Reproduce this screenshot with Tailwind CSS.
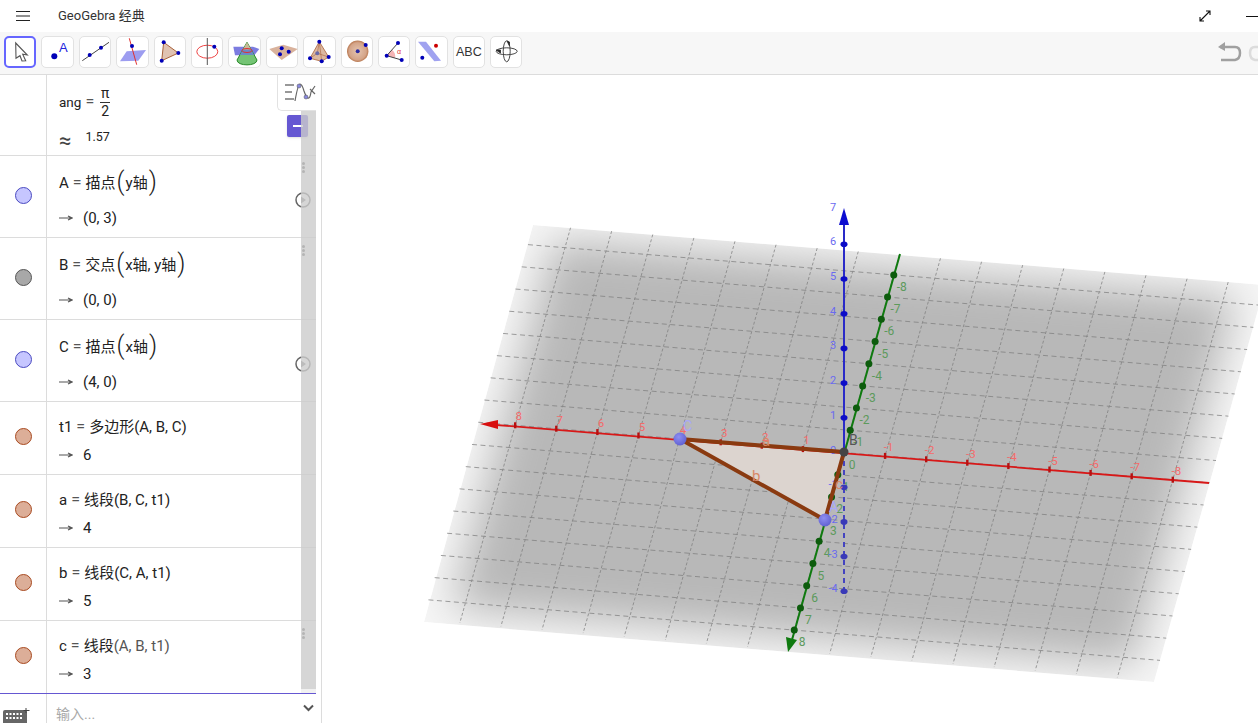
<!DOCTYPE html>
<html lang="zh-CN">
<head>
  <meta charset="UTF-8">
  <title>GeoGebra 经典</title>
  <script src="https://cdn.jsdelivr.net/npm/@tailwindcss/browser@4"></script>
</head>
<body class="w-[1258px] h-[723px] overflow-hidden bg-white text-[#222] font-[family-name:Roboto,'Noto_Sans_CJK_SC',sans-serif]">

  <!-- Header -->
  <header class="h-[32px] flex items-center relative">
    <svg class="ml-[16px] w-[14px] h-[10px]" viewBox="0 0 14 10"><path d="M0 .5h14M0 5h14M0 9.5h14" stroke="#222" stroke-width="1"/></svg>
    <span class="ml-[28px] text-[13px] text-[#333]">GeoGebra 经典</span>
    <div class="ml-auto flex items-center">
      <svg class="w-[12px] h-[12px] mr-[35px]" viewBox="0 0 12 12" fill="none" stroke="#111" stroke-width="1.1"><path d="M1 11 11 1M7 1h4v4M1 7v4h4"/></svg>
      <div class="w-[12px] h-px bg-[#111]"></div>
    </div>
  </header>

  <!-- Toolbar -->
  <div class="h-[43px] bg-[#f7f7f7] border-b border-[#dcdcdc] flex items-start pl-[4px] pt-[4px] gap-[5px] relative overflow-hidden">
    <button class="w-[32.4px] h-[32px] shrink-0 flex items-center justify-center rounded-[5px] bg-white border-2 border-[#6666ff]">
      <svg class="w-[32px] h-[32px] shrink-0" viewBox="0 0 32 32"><path d="M11.7 7 23.3 19l-4.6-.7 3 6.4-3.7.3-2-5.3-4 2.6z" fill="#fff" stroke="#555" stroke-width="1.1"/></svg>
    </button>
    <button class="w-[32.4px] h-[32px] shrink-0 flex items-center justify-center rounded-[5px] bg-white border border-[#e2e2e2]">
      <svg class="w-[32px] h-[32px] shrink-0" viewBox="0 0 32 32"><circle cx="12.3" cy="20.3" r="3" fill="#0000b8"/><text x="17" y="16" font-size="13" fill="#2222dd" font-family="Liberation Sans">A</text></svg>
    </button>
    <button class="w-[32.4px] h-[32px] shrink-0 flex items-center justify-center rounded-[5px] bg-white border border-[#e2e2e2]">
      <svg class="w-[32px] h-[32px] shrink-0" viewBox="0 0 32 32"><path d="M3.3 24.7 30 6.3" stroke="#444" stroke-width="1"/><circle cx="10.7" cy="19" r="2" fill="#0000b8"/><circle cx="22" cy="11.7" r="2" fill="#0000b8"/></svg>
    </button>
    <button class="w-[32.4px] h-[32px] shrink-0 flex items-center justify-center rounded-[5px] bg-white border border-[#e2e2e2]">
      <svg class="w-[32px] h-[32px] shrink-0" viewBox="0 0 32 32"><path d="M4 25.3 10.7 15.3 30 14 22.3 24.7z" fill="#9d9df0"/><path d="M13.3 2.3 20.7 28.7" stroke="#e03030" stroke-width="1"/><circle cx="16" cy="10" r="2" fill="#0000b8"/></svg>
    </button>
    <button class="w-[32.4px] h-[32px] shrink-0 flex items-center justify-center rounded-[5px] bg-white border border-[#e2e2e2]">
      <svg class="w-[32px] h-[32px] shrink-0" viewBox="0 0 32 32"><path d="M9.7 6.3 24.3 17 7.7 24.7z" fill="#e0c3b2" stroke="#a9623a" stroke-width="1"/><circle cx="9.7" cy="6.3" r="2" fill="#0000b8"/><circle cx="24.3" cy="17" r="2" fill="#0000b8"/><circle cx="7.7" cy="24.7" r="2" fill="#0000b8"/></svg>
    </button>
    <button class="w-[32.4px] h-[32px] shrink-0 flex items-center justify-center rounded-[5px] bg-white border border-[#e2e2e2]">
      <svg class="w-[32px] h-[32px] shrink-0" viewBox="0 0 32 32"><ellipse cx="16.3" cy="15.7" rx="10.5" ry="6.5" fill="none" stroke="#ee4444" stroke-width="1"/><path d="M16.3 2v27" stroke="#555" stroke-width="1"/><circle cx="23.3" cy="10.7" r="2" fill="#0000b8"/></svg>
    </button>
    <button class="w-[32.4px] h-[32px] shrink-0 flex items-center justify-center rounded-[5px] bg-white border border-[#e2e2e2]">
      <svg class="w-[32px] h-[32px] shrink-0" viewBox="0 0 32 32"><path d="M4.300 10.700H24l6.300 2.300-5 6.300H6z" fill="#7c7ce0"/><path d="M18 6.300 8 24c0 6.500 20 6.500 20 0z" fill="#74c474" stroke="#2a8a2a" stroke-width="1"/><path d="M14 13 11 19h14l-3-6z" fill="#6a8ac8"/><path d="M18 6.300 14 13.500h8z" fill="#c8b898"/><ellipse cx="18" cy="14.500" rx="5" ry="2" fill="none" stroke="#e03030"/></svg>
    </button>
    <button class="w-[32.4px] h-[32px] shrink-0 flex items-center justify-center rounded-[5px] bg-white border border-[#e2e2e2]">
      <svg class="w-[32px] h-[32px] shrink-0" viewBox="0 0 32 32"><path d="M3.300 13 17.300 8.700 31.700 13 15.700 24z" fill="#d9b29c"/><circle cx="15.700" cy="12.300" r="2" fill="#0000b8"/><circle cx="22.700" cy="15.700" r="2" fill="#0000b8"/><circle cx="14" cy="18.300" r="2" fill="#0000b8"/></svg>
    </button>
    <button class="w-[32.4px] h-[32px] shrink-0 flex items-center justify-center rounded-[5px] bg-white border border-[#e2e2e2]">
      <svg class="w-[32px] h-[32px] shrink-0" viewBox="0 0 32 32"><path d="M16.300 5.700 7 22.300 18.700 25.300 25.700 21z" fill="#dcb8a0" stroke="#a9623a" stroke-width=".8"/><path d="M16.300 5.700 14.300 17.300 7 22.300M14.300 17.300 25.700 21M16.300 5.700 18.700 25.300" stroke="#a9623a" stroke-width=".6" fill="none"/><circle cx="16.300" cy="5.700" r="2" fill="#0000b8"/><circle cx="7" cy="22.300" r="2" fill="#0000b8"/><circle cx="18.700" cy="25.300" r="2" fill="#0000b8"/><circle cx="25.700" cy="21" r="2" fill="#0000b8"/><circle cx="14.300" cy="17.300" r="2" fill="#6a6aa8"/></svg>
    </button>
    <button class="w-[32.4px] h-[32px] shrink-0 flex items-center justify-center rounded-[5px] bg-white border border-[#e2e2e2]">
      <svg class="w-[32px] h-[32px] shrink-0" viewBox="0 0 32 32"><defs><radialGradient id="ball"><stop offset="0" stop-color="#e4c4b0"/><stop offset=".8" stop-color="#d4a488"/><stop offset="1" stop-color="#b87850"/></radialGradient></defs><circle cx="16.700" cy="15.300" r="10.700" fill="url(#ball)"/><circle cx="16.700" cy="15.300" r="2" fill="#2a2aa0"/><circle cx="24.700" cy="9" r="2" fill="#0000b8"/></svg>
    </button>
    <button class="w-[32.4px] h-[32px] shrink-0 flex items-center justify-center rounded-[5px] bg-white border border-[#e2e2e2]">
      <svg class="w-[32px] h-[32px] shrink-0" viewBox="0 0 32 32"><path d="M8.700 19.700 14 13.700Q18 17 17 22z" fill="#f5b5b5"/><path d="M20 7 8.700 19.700 23.700 24" fill="none" stroke="#444" stroke-width="1"/><circle cx="20" cy="7" r="2" fill="#0000b8"/><circle cx="8.700" cy="19.700" r="2" fill="#0000b8"/><circle cx="23.700" cy="24" r="2" fill="#0000b8"/><text x="19" y="18" font-size="7" fill="#e03030" font-family="Liberation Sans">α</text></svg>
    </button>
    <button class="w-[32.4px] h-[32px] shrink-0 flex items-center justify-center rounded-[5px] bg-white border border-[#e2e2e2]">
      <svg class="w-[32px] h-[32px] shrink-0" viewBox="0 0 32 32"><path d="M2 5.700h8L25 24.700 18.300 25.300z" fill="#a0a2f0"/><circle cx="20" cy="9.700" r="2" fill="#cc0000"/><circle cx="6.300" cy="21.700" r="2" fill="#0000b8"/></svg>
    </button>
    <button class="w-[32.4px] h-[32px] shrink-0 flex items-center justify-center rounded-[5px] bg-white border border-[#e2e2e2] text-[12.500px] text-[#333] font-[family-name:'Liberation_Sans',sans-serif]">ABC</button>
    <button class="w-[32.4px] h-[32px] shrink-0 flex items-center justify-center rounded-[5px] bg-white border border-[#e2e2e2]">
      <svg class="w-[32px] h-[32px] shrink-0" viewBox="0 0 32 32" fill="none" stroke="#333" stroke-width=".9"><ellipse cx="16.700" cy="15.300" rx="10.500" ry="3.500"/><ellipse cx="16.700" cy="15.300" rx="3.500" ry="10.500"/><path d="M6 14h4.500v3z" fill="#222"/><path d="M17 5l2.500 1v4z" fill="#222"/></svg>
    </button>
    <div class="ml-auto flex items-center pt-[6px] gap-[6px] -mr-[14px]">
      <svg class="w-[24px] h-[20px] shrink-0" viewBox="0 0 24 20" fill="none"><path d="M2 5h15q5 0 5 6t-5 7H3" stroke="#a0a0a0" stroke-width="2.500"/><path d="M0 5 7 0v9z" fill="#a0a0a0"/></svg>
      <svg class="w-[24px] h-[20px] shrink-0" viewBox="0 0 24 20" fill="none"><path d="M22 5H7q-5 0-5 6t5 7h14" stroke="#dcdcdc" stroke-width="2.500"/></svg>
    </div>
  </div>

  <main class="flex h-[648px]">
    <!-- Algebra view -->
    <aside class="w-[322px] shrink-0 border-r border-[#dcdcdc] relative overflow-hidden">
      <div class="w-[316px] text-[15px] text-[#222]">

        <div class="h-[81px] flex border-b border-[#dcdcdc] text-[13.500px]">
          <div class="w-[47px] shrink-0 border-r border-[#dcdcdc]"></div>
          <div class="pl-[12px]">
            <div class="flex items-center h-[52px] pt-[2px] gap-[3px]">
              <span>ang</span><span class="text-[16px] px-px text-[#555]">=</span>
              <span class="flex flex-col items-center leading-[16px] text-[14px] ml-[2px]"><span>π</span><span class="border-t border-[#333] px-[1px] mt-[1px]">2</span></span>
            </div>
            <div class="flex items-center h-[22px] gap-[14px]"><span class="text-[22px] leading-none text-[#444] mt-[5px]">≈</span><span class="text-[12.500px] -mt-[2px]">1.57</span></div>
          </div>
        </div>

        <div class="h-[82px] flex border-b border-[#dcdcdc]">
          <div class="w-[47px] shrink-0 border-r border-[#dcdcdc] flex items-center justify-center pb-[3px]"><div class="w-[17px] h-[17px] rounded-full bg-[#c6c6ff] border border-[#4a4ac0]"></div></div>
          <div class="pl-[12px]">
            <div class="flex items-center h-[52px] pt-[2px] gap-[3px]"><span>A</span><span class="text-[16px] px-px text-[#555]">=</span><span>描点</span><span class="text-[25px] font-light leading-none -mt-[3px] -mx-[2px]">(</span><span>y轴</span><span class="text-[25px] font-light leading-none -mt-[3px] -mx-[2px]">)</span></div>
            <div class="flex items-center h-[20px] gap-[10px]"><svg class="w-[14px] h-[8px]" viewBox="0 0 14 8"><path d="M0 4h12M9 2l4 2-4 2" fill="none" stroke="#555" stroke-width="1.200"/></svg><span>(0, 3)</span></div>
          </div>
        </div>

        <div class="h-[82px] flex border-b border-[#dcdcdc]">
          <div class="w-[47px] shrink-0 border-r border-[#dcdcdc] flex items-center justify-center pb-[3px]"><div class="w-[17px] h-[17px] rounded-full bg-[#a8a8a8] border border-[#555]"></div></div>
          <div class="pl-[12px]">
            <div class="flex items-center h-[52px] pt-[2px] gap-[3px]"><span>B</span><span class="text-[16px] px-px text-[#555]">=</span><span>交点</span><span class="text-[25px] font-light leading-none -mt-[3px] -mx-[2px]">(</span><span>x轴, y轴</span><span class="text-[25px] font-light leading-none -mt-[3px] -mx-[2px]">)</span></div>
            <div class="flex items-center h-[20px] gap-[10px]"><svg class="w-[14px] h-[8px]" viewBox="0 0 14 8"><path d="M0 4h12M9 2l4 2-4 2" fill="none" stroke="#555" stroke-width="1.200"/></svg><span>(0, 0)</span></div>
          </div>
        </div>

        <div class="h-[82px] flex border-b border-[#dcdcdc]">
          <div class="w-[47px] shrink-0 border-r border-[#dcdcdc] flex items-center justify-center pb-[3px]"><div class="w-[17px] h-[17px] rounded-full bg-[#c6c6ff] border border-[#4a4ac0]"></div></div>
          <div class="pl-[12px]">
            <div class="flex items-center h-[52px] pt-[2px] gap-[3px]"><span>C</span><span class="text-[16px] px-px text-[#555]">=</span><span>描点</span><span class="text-[25px] font-light leading-none -mt-[3px] -mx-[2px]">(</span><span>x轴</span><span class="text-[25px] font-light leading-none -mt-[3px] -mx-[2px]">)</span></div>
            <div class="flex items-center h-[20px] gap-[10px]"><svg class="w-[14px] h-[8px]" viewBox="0 0 14 8"><path d="M0 4h12M9 2l4 2-4 2" fill="none" stroke="#555" stroke-width="1.200"/></svg><span>(4, 0)</span></div>
          </div>
        </div>

        <div class="h-[73px] flex border-b border-[#dcdcdc]">
          <div class="w-[47px] shrink-0 border-r border-[#dcdcdc] flex items-center justify-center pb-[3px]"><div class="w-[17px] h-[17px] rounded-full bg-[#dcae98] border border-[#a84a20]"></div></div>
          <div class="pl-[12px]">
            <div class="flex items-center h-[46px] pt-[4px] gap-[3px]"><span>t1</span><span class="text-[16px] px-px text-[#555]">=</span><span>多边形(A, B, C)</span></div>
            <div class="flex items-center h-[18px] -mt-[2px] gap-[10px]"><svg class="w-[14px] h-[8px]" viewBox="0 0 14 8"><path d="M0 4h12M9 2l4 2-4 2" fill="none" stroke="#555" stroke-width="1.200"/></svg><span>6</span></div>
          </div>
        </div>

        <div class="h-[73px] flex border-b border-[#dcdcdc]">
          <div class="w-[47px] shrink-0 border-r border-[#dcdcdc] flex items-center justify-center pb-[3px]"><div class="w-[17px] h-[17px] rounded-full bg-[#dcae98] border border-[#a84a20]"></div></div>
          <div class="pl-[12px]">
            <div class="flex items-center h-[46px] pt-[4px] gap-[3px]"><span>a</span><span class="text-[16px] px-px text-[#555]">=</span><span>线段(B, C, t1)</span></div>
            <div class="flex items-center h-[18px] -mt-[2px] gap-[10px]"><svg class="w-[14px] h-[8px]" viewBox="0 0 14 8"><path d="M0 4h12M9 2l4 2-4 2" fill="none" stroke="#555" stroke-width="1.200"/></svg><span>4</span></div>
          </div>
        </div>

        <div class="h-[73px] flex border-b border-[#dcdcdc]">
          <div class="w-[47px] shrink-0 border-r border-[#dcdcdc] flex items-center justify-center pb-[3px]"><div class="w-[17px] h-[17px] rounded-full bg-[#dcae98] border border-[#a84a20]"></div></div>
          <div class="pl-[12px]">
            <div class="flex items-center h-[46px] pt-[4px] gap-[3px]"><span>b</span><span class="text-[16px] px-px text-[#555]">=</span><span>线段(C, A, t1)</span></div>
            <div class="flex items-center h-[18px] -mt-[2px] gap-[10px]"><svg class="w-[14px] h-[8px]" viewBox="0 0 14 8"><path d="M0 4h12M9 2l4 2-4 2" fill="none" stroke="#555" stroke-width="1.200"/></svg><span>5</span></div>
          </div>
        </div>

        <div class="h-[73px] flex border-b border-[#6557d2]">
          <div class="w-[47px] shrink-0 border-r border-[#dcdcdc] flex items-center justify-center pb-[3px]"><div class="w-[17px] h-[17px] rounded-full bg-[#dcae98] border border-[#a84a20]"></div></div>
          <div class="pl-[12px]">
            <div class="flex items-center h-[46px] pt-[4px] gap-[3px]"><span>c</span><span class="text-[16px] px-px text-[#555]">=</span><span>线段<span class="text-[#555]">(A, B, t1)</span></span></div>
            <div class="flex items-center h-[18px] -mt-[2px] gap-[10px]"><svg class="w-[14px] h-[8px]" viewBox="0 0 14 8"><path d="M0 4h12M9 2l4 2-4 2" fill="none" stroke="#555" stroke-width="1.200"/></svg><span>3</span></div>
          </div>
        </div>

        <!-- Input row -->
        <div class="h-[30px] flex">
          <div class="w-[47px] shrink-0 border-r border-[#dcdcdc] relative overflow-hidden">
            <svg class="absolute left-[2px] top-[14px] w-[28px] h-[16px]" viewBox="0 0 28 16"><path d="M3 2h20q2 0 2 2v12H1V4q0-2 2-2z" fill="#666"/><path d="M4 5h2v2H4zM7.500 5h2v2h-2zM11 5h2v2h-2zM14.500 5h2v2h-2zM18 5h2v2h-2zM4 9h2v2H4zM7.500 9h2v2h-2zM11 9h2v2h-2zM14.500 9h2v2h-2zM18 9h2v2h-2z" fill="#fff"/><path d="M24 0v5M21.500 2.500h6" stroke="#444" stroke-width="1"/></svg>
          </div>
          <span class="pl-[9px] pt-[13px] text-[14px] text-[#a8a8a8] leading-none">输入...</span>
        </div>
      </div>

      <!-- Overlays: style bar toggle, delete button, play buttons, scrollbar -->
      <div class="absolute left-[287px] top-[40px] w-[21px] h-[22px] bg-[#6557d2] rounded-[2px] flex items-center justify-center shadow"><div class="w-[10px] h-[2px] bg-white"></div></div>
      <svg class="absolute left-[295px] top-[117px] w-[16px] h-[16px]" viewBox="0 0 16 16"><circle cx="8" cy="8" r="7" fill="#fff" stroke="#666" stroke-width="1.500"/><path d="M6 4.500 11 8l-5 3.500z" fill="#777"/></svg>
      <svg class="absolute left-[295px] top-[281px] w-[16px] h-[16px]" viewBox="0 0 16 16"><circle cx="8" cy="8" r="7" fill="#fff" stroke="#666" stroke-width="1.500"/><path d="M6 4.500 11 8l-5 3.500z" fill="#777"/></svg>
      <div class="absolute left-[301px] top-[27px] w-[15px] h-[587px] bg-[#cccccc]/80"></div>
      <div class="absolute left-[301px] top-[614px] w-[15px] h-[4px] bg-[#f1f1f1]"></div>
      <div class="absolute left-[301px] top-0 w-[15px] h-[27px] bg-[#eeeeee]"></div>
      <div class="absolute left-[277px] top-0 w-[39px] h-[36px] bg-white border-l border-b border-[#e2e2e2] rounded-bl-[5px]">
        <svg class="w-[38px] h-[35px]" viewBox="0 0 38 35" fill="none"><path d="M7 10h9M7 17h7M7 24h9" stroke="#777" stroke-width="1.300"/><path d="M17 26q3-17 5-17t4 7q2 6 4 7t3-6l4-6M32 14l5 5" stroke="#666" stroke-width="1.200"/><circle cx="21" cy="11" r="2" fill="#8a8ae0" stroke="#555" stroke-width=".5"/><circle cx="28" cy="22" r="2" fill="#8a8ae0" stroke="#555" stroke-width=".5"/></svg>
      </div>
      <div class="absolute left-[302px] top-[87px] w-[3px] flex flex-col gap-[1px] items-center"><i class="w-[3px] h-[3px] rounded-full bg-[#b4b4b4]"></i><i class="w-[3px] h-[3px] rounded-full bg-[#b4b4b4]"></i><i class="w-[3px] h-[3px] rounded-full bg-[#b4b4b4]"></i></div>
      <div class="absolute left-[302px] top-[170px] w-[3px] flex flex-col gap-[1px] items-center"><i class="w-[3px] h-[3px] rounded-full bg-[#b4b4b4]"></i><i class="w-[3px] h-[3px] rounded-full bg-[#b4b4b4]"></i><i class="w-[3px] h-[3px] rounded-full bg-[#b4b4b4]"></i></div>
      <div class="absolute left-[302px] top-[553px] w-[3px] flex flex-col gap-[1px] items-center"><i class="w-[3px] h-[3px] rounded-full bg-[#b4b4b4]"></i><i class="w-[3px] h-[3px] rounded-full bg-[#b4b4b4]"></i><i class="w-[3px] h-[3px] rounded-full bg-[#b4b4b4]"></i></div>
      <svg class="absolute left-[303px] top-[629px] w-[11px] h-[8px]" viewBox="0 0 11 8"><path d="M1 1.500l4.500 4.500L10 1.500" fill="none" stroke="#555" stroke-width="2"/></svg>
    </aside>

    <!-- 3D graphics view -->
    <section class="flex-1 relative overflow-hidden">
      <svg id="scene" class="block w-[936px] h-[648px]" viewBox="322 75 936 648" font-family="Roboto, sans-serif">
        <defs>
          <clipPath id="planeClip"><polygon points="533,225 1265,285 1154,682 424,622"/></clipPath>
          <filter id="soft" x="-20%" y="-20%" width="140%" height="140%"><feGaussianBlur stdDeviation="21"/></filter>
          <radialGradient id="sphere" cx=".4" cy=".35" r=".7"><stop offset="0" stop-color="#8e8ef2"/><stop offset="1" stop-color="#5e5ed0"/></radialGradient>
        </defs>
        <g clip-path="url(#planeClip)">
          <polygon points="533,225 1265,285 1154,682 424,622" fill="#f6f6f6"/>
          <polygon id="shade" fill="#b8b8b8" filter="url(#soft)"/>
        </g>
        <g id="grid" fill="none" stroke="#7c7c7c" stroke-width=".9" opacity=".8"></g>
        <polygon points="680,439 844,452 825,520" fill="#dcd4cf"/>
        <g id="axes"></g>
        <g stroke="#8a3a10" stroke-width="4" stroke-linecap="round"><path d="M680 439 844 452"/><path d="M844 452 825 520"/><path d="M825 520 680 439"/></g>
        <circle cx="680" cy="439" r="6.500" fill="url(#sphere)"/>
        <circle cx="825" cy="520" r="6.500" fill="url(#sphere)"/>
        <circle cx="844" cy="452" r="4.500" fill="#444"/>
        <g font-size="14">
          <text x="683" y="431" fill="#a8a8f8">C</text>
          <text x="829" y="512" fill="#a8a8f8">A</text>
          <text x="849" y="445" fill="#555">B</text>
          <text x="762" y="446" fill="#d88868" font-size="15">a</text>
          <text x="752" y="481" fill="#d88868" font-size="15">b</text>
          <text x="835" y="489" fill="#d88868" font-size="15">c</text>
        </g>
      </svg>
    </section>
  </main>

  <script>
    // Plane coordinates: u runs along the red axis, v along the green axis
    const O = [844, 452.5];
    const pt = (u, v) => [O[0] - 41.1 * u - 6.22 * v, O[1] - 3.4 * u + 22.2 * v];
    const NS = 'http://www.w3.org/2000/svg';
    const add = (parent, tag, attrs, text) => {
      const el = document.createElementNS(NS, tag);
      for (const k in attrs) el.setAttribute(k, attrs[k]);
      if (text !== undefined) el.textContent = text;
      parent.appendChild(el);
      return el;
    };
    const E = 8.9;
    const poly = (e) => [pt(e, -e), pt(-e, -e), pt(-e, e), pt(e, e)].map(p => p.join(',')).join(' ');
    document.getElementById('shade').setAttribute('points', poly(8.3));

    const grid = document.getElementById('grid');
    for (let i = -8; i <= 8; i++) {
      const a = pt(i, -E), b = pt(i, E);
      add(grid, 'line', {x1: a[0], y1: a[1], x2: b[0], y2: b[1], 'stroke-dasharray': '3 2'});
      const c = pt(E, i), d = pt(-E, i);
      add(grid, 'line', {x1: c[0], y1: c[1], x2: d[0], y2: d[1], 'stroke-dasharray': '5 3.5'});
    }

    const axes = document.getElementById('axes');
    // red axis
    add(axes, 'line', {x1: 490, y1: 424.5, x2: 1209, y2: 483, stroke: '#d81818', 'stroke-width': 1.8});
    add(axes, 'polygon', {points: '480,424 498,420 498,429', fill: '#d81010'});
    for (let i = -8; i <= 8; i++) {
      if (i === 0) continue;
      const p = pt(i, 0);
      add(axes, 'line', {x1: p[0], y1: p[1] - 3, x2: p[0], y2: p[1] + 3, stroke: '#b81010', 'stroke-width': 2.4});
      add(axes, 'text', {x: p[0] + 3.5, y: p[1] - 5, fill: '#f46a6a', 'font-size': 11.5, 'text-anchor': 'middle'}, String(i));
    }
    // green axis
    add(axes, 'line', {x1: 900, y1: 254, x2: 792, y2: 640, stroke: '#0f7a0f', 'stroke-width': 2});
    add(axes, 'polygon', {points: '788,652 786,637 797,640', fill: '#0f7a0f'});
    for (let i = -8; i <= 8; i++) {
      const p = pt(0, i);
      if (i !== 0) add(axes, 'circle', {cx: p[0], cy: p[1], r: 3.5, fill: '#0d5c0d'});
      add(axes, 'text', {x: p[0] + 8, y: p[1] + 16, fill: '#5c9a5c', 'font-size': 12, 'text-anchor': 'middle'}, String(i));
    }
    // blue axis
    add(axes, 'line', {x1: 844, y1: 222, x2: 844, y2: 452, stroke: '#2a2ac8', 'stroke-width': 2});
    add(axes, 'line', {x1: 844, y1: 452, x2: 844, y2: 592, stroke: '#4444c0', 'stroke-width': 2, 'stroke-dasharray': '5 4'});
    add(axes, 'polygon', {points: '844,208 839,225 849,225', fill: '#0c0cd0'});
    for (let i = -4; i <= 7; i++) {
      const y = 452.5 - i * 34.7;
      if (i !== 0 && i !== 7) add(axes, 'ellipse', {cx: 844, cy: y, rx: 3.5, ry: 2.8, fill: i < 0 ? '#3a3ab8' : '#0c0cc8'});
      add(axes, 'text', {x: 833, y: i === 7 ? 211 : y + 1, fill: '#6a6af0', 'font-size': 11, 'text-anchor': 'middle'}, String(i));
    }
  </script>
</body>
</html>
